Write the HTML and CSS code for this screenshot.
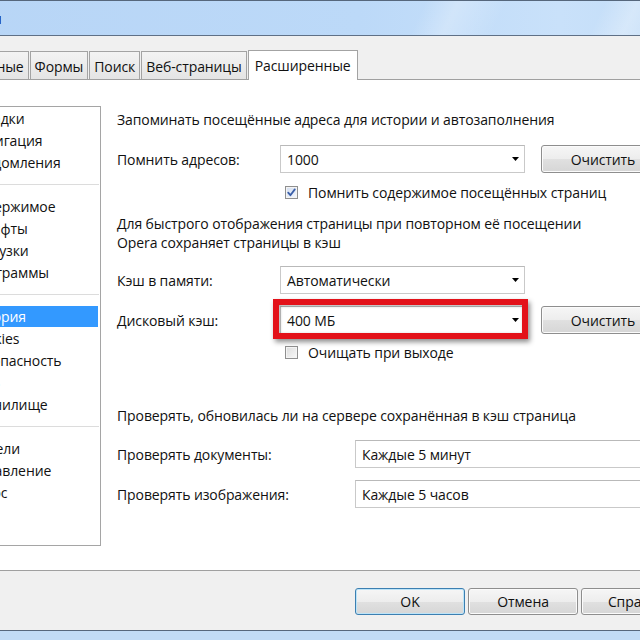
FILE: index.html
```html
<!DOCTYPE html>
<html lang="ru">
<head>
<meta charset="utf-8">
<title>Настройки</title>
<link rel="stylesheet" href="styles.css">
</head>
<body>
<div class="window">
  <div class="titlebar"><span class="title">Настройки</span></div>
  <div class="tabstrip">
    <div class="tab">Основные</div>
    <div class="tab">Формы</div>
    <div class="tab">Поиск</div>
    <div class="tab">Веб-страницы</div>
    <div class="tab active">Расширенные</div>
  </div>
  <div class="panel">
    <ul class="listbox">
      <li>Вкладки</li>
      <li>Навигация</li>
      <li>Уведомления</li>
      <li class="sep"></li>
      <li>Содержимое</li>
      <li>Шрифты</li>
      <li>Загрузки</li>
      <li>Программы</li>
      <li class="sep"></li>
      <li class="selected">История</li>
      <li>Cookies</li>
      <li>Безопасность</li>
      <li>Сеть</li>
      <li>Хранилище</li>
      <li class="sep"></li>
      <li>Панели</li>
      <li>Управление</li>
      <li>Голос</li>
    </ul>
    <div class="main">
      <div class="heading">Запоминать посещённые адреса для истории и автозаполнения</div>
      <div class="row r1">
        <span class="label">Помнить адресов:</span>
        <div class="combo"><span>1000</span><svg class="arrow" width="7" height="4" viewBox="0 0 7 4"><polygon points="0,0 7,0 3.5,4" fill="#000"/></svg></div>
        <button class="btn clear">Очистить</button>
      </div>
      <div class="check c1">
        <span class="box checked"><svg width="11" height="11" viewBox="0 0 11 11"><path d="M2.2 5.6 L4.4 8.2 L8.8 2.4" fill="none" stroke="#3b5fa8" stroke-width="1.8" stroke-linecap="round" stroke-linejoin="round"/></svg></span>
        <span>Помнить содержимое посещённых страниц</span>
      </div>
      <div class="para">Для быстрого отображения страницы при повторном её посещении<br>Opera сохраняет страницы в кэш</div>
      <div class="row r2">
        <span class="label">Кэш в памяти:</span>
        <div class="combo"><span>Автоматически</span><svg class="arrow" width="7" height="4" viewBox="0 0 7 4"><polygon points="0,0 7,0 3.5,4" fill="#000"/></svg></div>
      </div>
      <div class="row r3">
        <span class="label">Дисковый кэш:</span>
        <div class="combo marked"><span>400 МБ</span><svg class="arrow" width="7" height="4" viewBox="0 0 7 4"><polygon points="0,0 7,0 3.5,4" fill="#000"/></svg><span class="redbox"></span></div>
        <button class="btn clear">Очистить</button>
      </div>
      <div class="check c2">
        <span class="box"></span>
        <span>Очищать при выходе</span>
      </div>
      <div class="heading h2">Проверять, обновилась ли на сервере сохранённая в кэш страница</div>
      <div class="row r4">
        <span class="label wide">Проверять документы:</span>
        <div class="combo long"><span>Каждые 5 минут</span></div>
      </div>
      <div class="row r5">
        <span class="label wide">Проверять изображения:</span>
        <div class="combo long"><span>Каждые 5 часов</span></div>
      </div>
    </div>
  </div>
  <div class="footer">
    <button class="btn fbtn default">OK</button>
    <button class="btn fbtn">Отмена</button>
    <button class="btn fbtn">Справка</button>
  </div>
  <div class="frame-bottom"></div>
</div>
</body>
</html>
```
FILE: styles.css
```css
html, body {
  margin: 0;
  padding: 0;
  width: 640px;
  height: 640px;
  overflow: hidden;
  background: #f0f0f0;
}
body {
  font-family: "Open Sans", "Noto Sans", sans-serif;
  font-size: 14px;
  letter-spacing: -0.1px;
  color: #111;
}
.window {
  width: 800px;
  height: 640px;
  margin-left: -80px;
  display: flex;
  flex-direction: column;
}
.titlebar {
  height: 34px;
  border-top: 1px solid #56677c;
  border-bottom: 1px solid #5f7086;
  background:
    linear-gradient(115deg, rgba(255,255,255,0) 62%, rgba(255,255,255,0.25) 66%, rgba(255,255,255,0) 72%, rgba(255,255,255,0) 84%, rgba(255,255,255,0.3) 88%, rgba(255,255,255,0) 94%),
    linear-gradient(to right, #b7d5f6 0%, #bcd9f8 55%, #c9e1fa 80%, #c0dbf6 100%);
  display: flex;
  align-items: center;
  padding-left: 4px;
  font-size: 15px;
  color: #000;
}
.tabstrip {
  height: 43px;
  display: flex;
  align-items: flex-end;
  padding-left: 29px;
  background: #f0f0f0;
}
.tab {
  height: 28px;
  line-height: 27px;
  padding: 1px 4px 0;
  box-sizing: border-box;
  border: 1px solid #a3a3a3;
  border-bottom: none;
  background: linear-gradient(#f3f3f3, #e4e4e4);
  color: #111;
  white-space: nowrap;
}
.tab + .tab { margin-left: 1px; }
.tab.active {
  height: 30px;
  margin-bottom: -1px;
  background: #fff;
  position: relative;
  z-index: 1;
  padding-top: 0;
  line-height: 30px;
  padding-left: 6px;
  padding-right: 6px;
}
.panel {
  height: 490px;
  border-top: 1px solid #a0a0a0;
  border-bottom: 1px solid #a0a0a0;
  background: #fff;
  display: flex;
  align-items: flex-start;
  padding-left: 44px;
}
.listbox {
  list-style: none;
  margin: 26px 0 0;
  padding: 1px 1px 0;
  width: 137px;
  height: 440px;
  box-sizing: border-box;
  border: 1px solid #a5a5a5;
  overflow: hidden;
}
.listbox li {
  height: 22px;
  line-height: 22px;
  padding-left: 3px;
  white-space: nowrap;
  color: #111;
}
.listbox li.sep {
  position: relative;
  padding: 0;
}
.listbox li.sep::after {
  content: "";
  position: absolute;
  left: 0;
  right: 0;
  top: 10px;
  border-top: 1px solid #dcdcdc;
}
.listbox li.selected {
  background: #3399ff;
  color: #fff;
  height: 21px;
  line-height: 21px;
  margin-bottom: 1px;
  margin-right: 1px;
}
.main {
  margin-left: 16px;
  padding-top: 30px;
  display: flex;
  flex-direction: column;
}
.heading { line-height: 20px; white-space: nowrap; }
.row {
  display: flex;
  align-items: center;
  height: 28px;
}
.label { width: 163px; flex: none; white-space: nowrap; }
.label.wide { width: 238px; }
.combo {
  position: relative;
  width: 245px;
  height: 28px;
  box-sizing: border-box;
  border: 1px solid #c9c9c9;
  border-top-color: #b9b9b9;
  background: #fff;
  display: flex;
  align-items: center;
  padding-left: 6px;
  padding-right: 5px;
  white-space: nowrap;
}
.combo.long { width: 300px; }
.combo .arrow { margin-left: auto; }
.redbox {
  position: absolute;
  left: -8px;
  top: -8px;
  right: -4px;
  bottom: -6px;
  border: 6px solid #e3121a;
  box-shadow: 2px 3px 5px rgba(0,0,0,0.45), inset 1px 1px 3px rgba(0,0,0,0.35);
  pointer-events: none;
}
.btn {
  font-family: inherit;
  font-size: 14px;
  letter-spacing: -0.1px;
  color: #111;
  border: 1px solid #8e8e8e;
  border-radius: 3px;
  background: linear-gradient(#f6f6f6 0%, #ededed 50%, #e0e0e0 52%, #d6d6d6 100%);
  box-shadow: inset 0 0 0 1px #fbfbfb;
  padding: 0;
}
.btn.clear {
  margin-left: 16px;
  width: 124px;
  height: 28px;
  flex: none;
}
.r1 { margin-top: 15px; }
.check {
  display: flex;
  align-items: center;
  height: 20px;
  padding-left: 168px;
  white-space: nowrap;
}
.c1 { margin-top: 9px; }
.c2 { margin-top: 8px; }
.box {
  width: 13px;
  height: 13px;
  box-sizing: border-box;
  border: 1px solid #8f8f8f;
  background: linear-gradient(135deg, #dcdcdc, #f8f8f8);
  box-shadow: inset 0 0 0 1px #f4f4f4;
  margin-right: 10px;
  display: flex;
  align-items: center;
  justify-content: center;
  flex: none;
}
.box.checked {
  background: linear-gradient(135deg, #d3def0, #f4f7fc);
}
.para { margin-top: 12px; line-height: 19px; white-space: nowrap; }
.r2 { margin-top: 14px; }
.r3 { margin-top: 12px; }
.h2 { margin-top: 44px; }
.r4 { margin-top: 14px; }
.r5 { margin-top: 12px; }
.footer {
  height: 59px;
  box-sizing: border-box;
  padding-top: 17px;
  padding-left: 435px;
  display: flex;
  gap: 3px;
  background: #f0f0f0;
}
.fbtn {
  width: 110px;
  height: 27px;
  flex: none;
}
.fbtn.default {
  border-color: #3c7fb1;
  box-shadow: inset 0 0 0 1px #bde4f8;
}
.frame-bottom {
  height: 9px;
  border-top: 1px solid #56677c;
  background: #c1dbf5;
}
```
